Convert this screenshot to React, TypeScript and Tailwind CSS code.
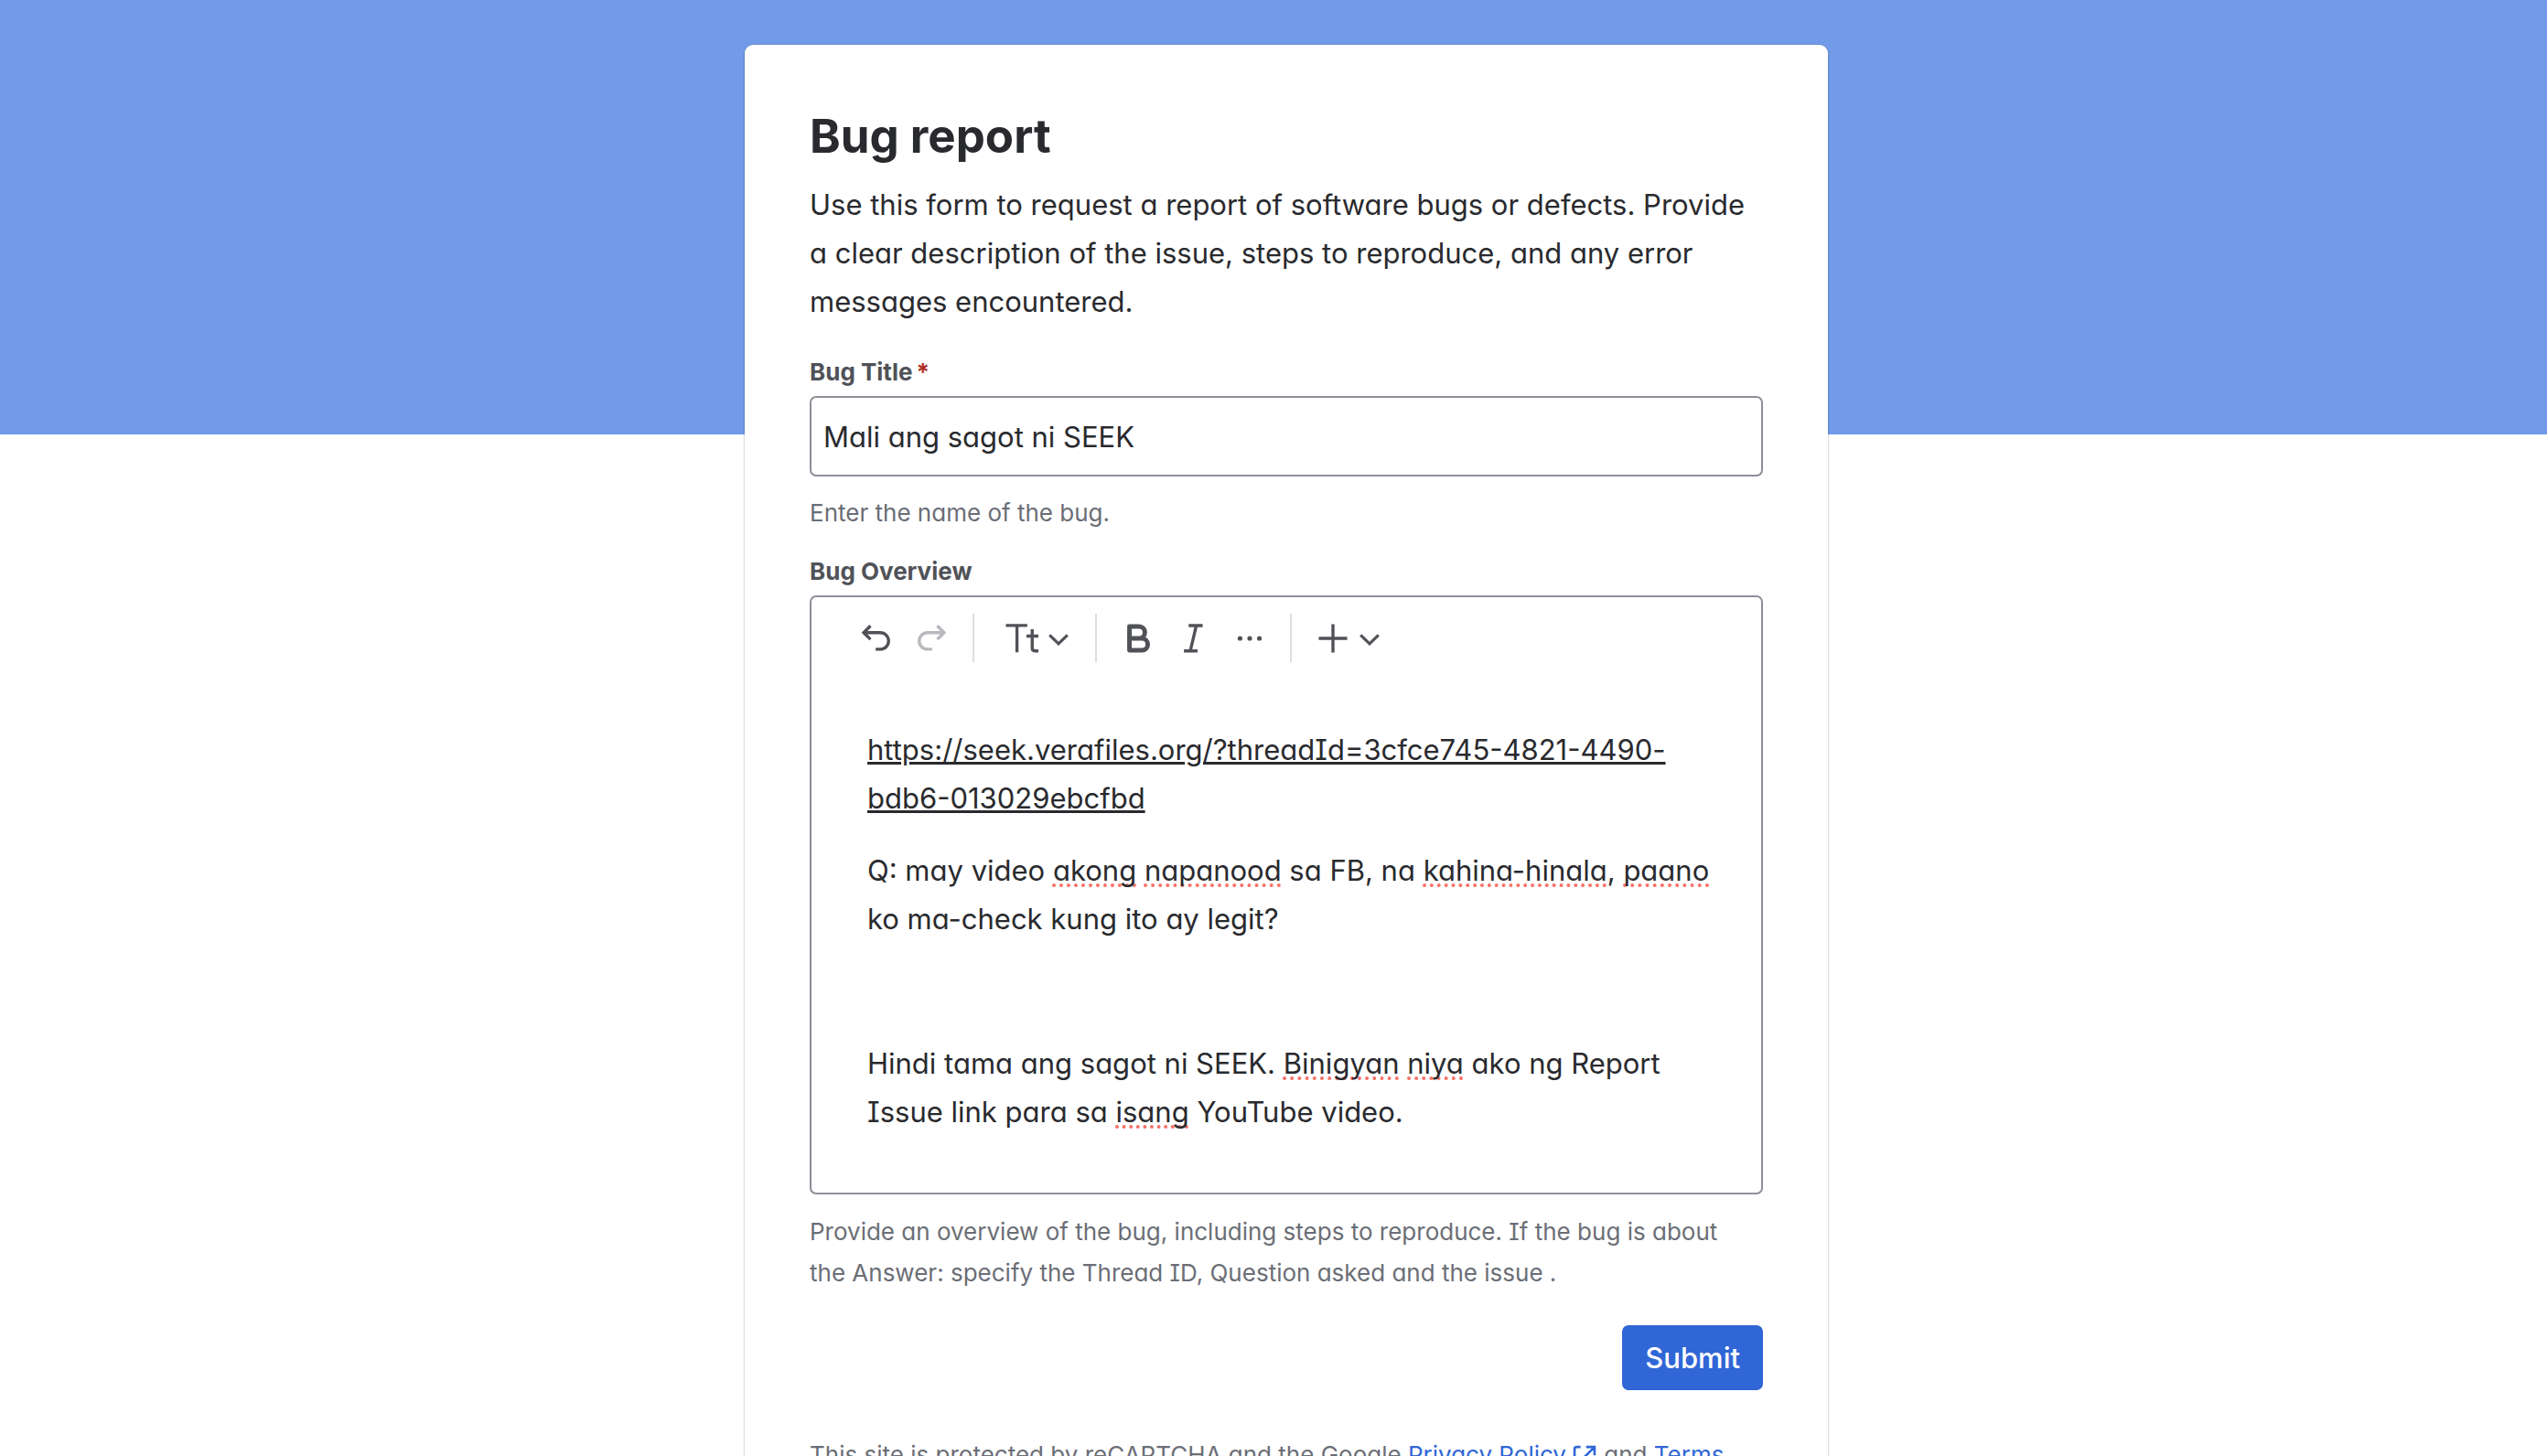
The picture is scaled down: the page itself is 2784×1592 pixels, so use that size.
import React from "react";

type IconProps = { children: React.ReactNode; className?: string };

function Icon({ children, className = "size-9" }: IconProps) {
  return (
    <svg viewBox="0 0 16 16" className={className} fill="none" stroke="currentColor" strokeWidth="1.5" aria-hidden="true">
      {children}
    </svg>
  );
}

const Undo = () => (
  <Icon>
    <path d="M5.1 1.9 1.8 5.2l3.3 3.3M2 5.2h7.85a4.05 4.05 0 0 1 0 8.1H7.6" />
  </Icon>
);
const Redo = () => (
  <Icon>
    <path d="M10.9 1.9l3.3 3.3-3.3 3.3M14 5.2H6.15a4.05 4.05 0 0 0 0 8.1H8.4" />
  </Icon>
);
const Chevron = () => (
  <Icon className="size-7">
    <path d="M2.4 5.9 8 11.3l5.6-5.4" strokeWidth="1.8" />
  </Icon>
);
const TextStyles = () => (
  <Icon>
    <path d="M.2 1.7h10.4M5.6 1.7v13.1M10.2 6.9H16M13 3.6v9.1q0 1.4 1.4 1.4H16" />
  </Icon>
);
const Bold = () => (
  <Icon>
    <path d="M3.8 2.2h4.6a2.9 2.9 0 0 1 0 5.8H3.8zM3.8 8h6a2.9 2.9 0 0 1 0 5.8h-6z" strokeWidth="2.2" strokeLinejoin="round" />
  </Icon>
);
const Italic = () => (
  <Icon>
    <path d="M5.9 1.8h6.8M3.6 14.1h6.6M9.6 1.8 6.7 14.1" />
  </Icon>
);
const More = () => (
  <Icon>
    <g fill="currentColor" stroke="none">
      <circle cx="3.3" cy="8" r="1.15" />
      <circle cx="8" cy="8" r="1.15" />
      <circle cx="12.7" cy="8" r="1.15" />
    </g>
  </Icon>
);
const Plus = () => (
  <Icon>
    <path d="M8 1.1v13.8M1.1 8h13.8" />
  </Icon>
);
const External = () => (
  <Icon className="ml-1.5 inline size-7">
    <path d="M5.5 1.75H3A1.25 1.25 0 0 0 1.75 3v10A1.25 1.25 0 0 0 3 14.25h10A1.25 1.25 0 0 0 14.25 13v-2.5M9 1.75h5.25V7M14.25 1.75 7.5 8.5" />
  </Icon>
);

const Divider = () => <span className="h-[53px] w-0.5 bg-[#dddee1]" />;

function Misspelt({ children }: { children: React.ReactNode }) {
  return (
    <span className="underline decoration-[#f87168] decoration-dotted decoration-4 underline-offset-[3px] [text-decoration-skip-ink:none]">
      {children}
    </span>
  );
}

export default function App() {
  return (
    <div className="h-screen overflow-hidden bg-white font-['Inter',sans-serif] text-[31px] leading-[53px] text-[#292a2e] [font-feature-settings:'cv11','cv08']">
      <div className="h-[475px] bg-[#719ae9]" />
      <div className="-mt-[426px] pl-7">
        <main className="mx-auto w-full max-w-[1184px] rounded-[9px] bg-white px-[71px] pt-[71px] pb-20 shadow-[0_2px_2px_rgba(30,31,33,0.25),0_0_2px_rgba(30,31,33,0.31)]">
          <form onSubmit={(e) => e.preventDefault()}>
            <h1 className="text-[51px] leading-[58px] font-bold">Bug report</h1>
            <p className="mt-[19px]">
              Use this form to request a report of software bugs or defects. Provide a clear description of the issue,
              steps to reproduce, and any error messages encountered.
            </p>

            <label htmlFor="bug-title" className="mt-[33px] block text-[26px] leading-9 font-bold text-[#505258]">
              Bug Title<span className="ml-1 text-[#ae2e24]">*</span>
            </label>
            <input
              id="bug-title"
              type="text"
              required
              defaultValue="Mali ang sagot ni SEEK"
              className="mt-2 block h-[88px] w-full rounded-[7px] border-2 border-[#8c8f97] bg-white px-[13px]"
            />
            <p className="mt-[17px] text-[26px] leading-[45px] text-[#6b6e76]">Enter the name of the bug.</p>

            <div id="overview-label" className="mt-6 text-[26px] leading-9 font-bold text-[#505258]">
              Bug Overview
            </div>
            <section className="mt-2 rounded-[7px] border-2 border-[#8c8f97]">
              <div role="toolbar" aria-label="Formatting" className="flex h-[89px] items-center pl-[53px] text-[#505258]">
                <button type="button" aria-label="Undo"><Undo /></button>
                <button type="button" aria-label="Redo" disabled className="mr-[27px] ml-6 text-[#b7b9be]"><Redo /></button>
                <Divider />
                <button type="button" aria-label="Text styles" className="mr-[26px] ml-[34px] flex items-center gap-2"><TextStyles /><Chevron /></button>
                <Divider />
                <button type="button" aria-label="Bold" className="ml-[27px]"><Bold /></button>
                <button type="button" aria-label="Italic" className="mx-6"><Italic /></button>
                <button type="button" aria-label="More formatting" className="mr-[26px] ml-0.5"><More /></button>
                <Divider />
                <button type="button" aria-label="Insert" className="ml-[27px] flex items-center gap-2"><Plus /><Chevron /></button>
              </div>
              <div
                role="textbox"
                aria-multiline="true"
                aria-labelledby="overview-label"
                contentEditable
                suppressContentEditableWarning
                spellCheck={false}
                className="flex flex-col gap-[26px] pt-[51px] pr-[52px] pb-[62px] pl-[61px] outline-none"
              >
                <p>
                  <a href="https://seek.verafiles.org/?threadId=3cfce745-4821-4490-bdb6-013029ebcfbd" className="underline decoration-3 underline-offset-2">
                    https://seek.verafiles.org/?threadId=3cfce745-4821-4490-bdb6-013029ebcfbd
                  </a>
                </p>
                <p>
                  Q: may video <Misspelt>akong</Misspelt> <Misspelt>napanood</Misspelt> sa FB, na{" "}
                  <Misspelt>kahina-hinala</Misspelt>, <Misspelt>paano</Misspelt> ko ma-check kung ito ay legit?
                </p>
                <p><br /></p>
                <p>
                  Hindi tama ang sagot ni SEEK. <Misspelt>Binigyan</Misspelt> <Misspelt>niya</Misspelt> ako ng Report
                  Issue link para sa <Misspelt>isang</Misspelt> YouTube video.
                </p>
              </div>
            </section>
            <p className="mt-[18px] pr-6 text-[26px] leading-[45px] text-[#6b6e76]">
              Provide an overview of the bug, including steps to reproduce. If the bug is about the Answer: specify the
              Thread ID, Question asked and the issue .
            </p>

            <div className="mt-[35px] flex justify-end">
              <button type="submit" className="h-[71px] rounded-[7px] bg-[#3066d6] px-[25px] font-medium text-white">
                Submit
              </button>
            </div>
          </form>
          <p className="mt-12 pr-6 text-[26px] leading-[45px] text-[#6b6e76]">
            This site is protected by reCAPTCHA and the Google{" "}
            <a href="https://policies.google.com/privacy" className="text-[#3066d6]">Privacy Policy<External /></a> and{" "}
            <a href="https://policies.google.com/terms" className="text-[#3066d6]">Terms of Service<External /></a> apply.
          </p>
        </main>
      </div>
    </div>
  );
}
